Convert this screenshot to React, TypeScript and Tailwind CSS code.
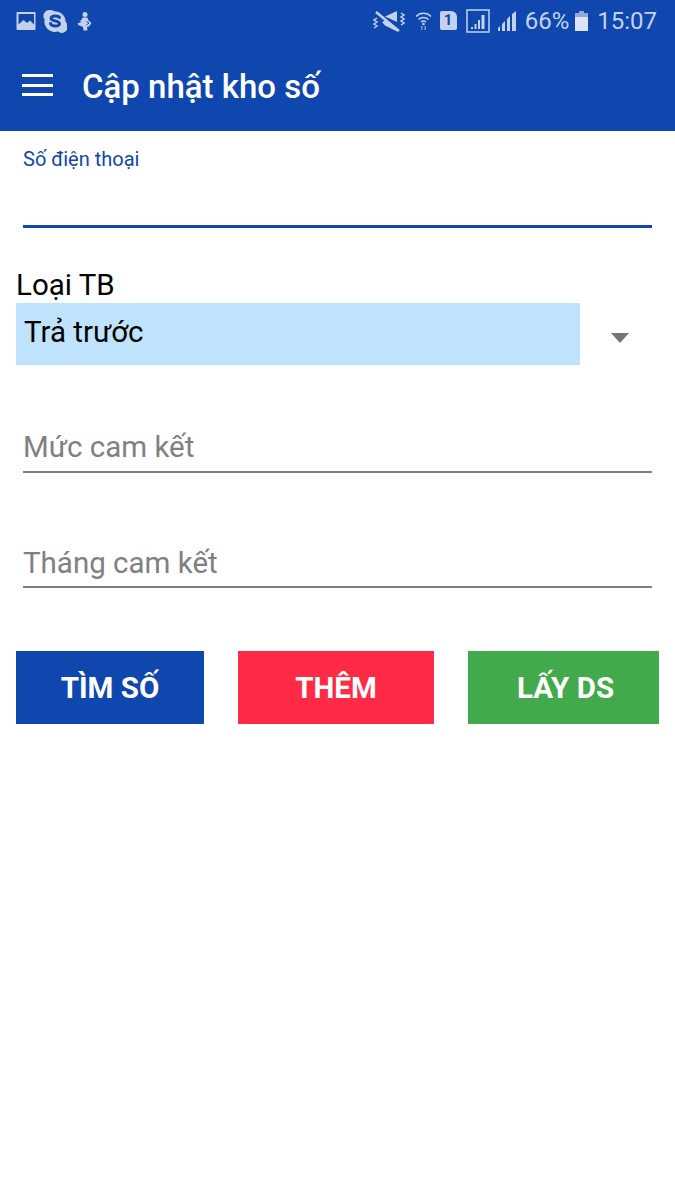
import React from "react";

const ICON = "#c3d2ec";

function StatusLeft() {
  return (
    <div className="flex items-center">
      <svg width="20" height="20" viewBox="0 0 20 20" className="ml-[16px]">
        <path fill={ICON} fillRule="evenodd" d="M1.5 1h17a1 1 0 0 1 1 1v16a1 1 0 0 1-1 1h-17a1 1 0 0 1-1-1V2a1 1 0 0 1 1-1zM2.5 13.500l5-4.500 3.500 3 3-2.500 4 4V3h-15.500z" />
      </svg>
      <svg width="24" height="24" viewBox="0 0 24 24" className="ml-[7px]">
        <path fill={ICON} d="M7 1a6 6 0 0 1 4 1.300A10.500 10.500 0 0 1 22.600 13a6 6 0 0 1-7.600 9.600A10.500 10.500 0 0 1 1.600 10.500 6 6 0 0 1 7 1z" />
        <path fill="none" stroke="#0f47af" strokeWidth="3" strokeLinecap="round" d="M16.500 8.500c-1-1.700-8-2.500-8.500.8-.4 3 8.500 2.200 8.500 5.500 0 3-7.500 3-9-.2" />
      </svg>
      <svg width="16" height="20" viewBox="0 0 16 20" className="ml-[10px]">
        <circle cx="8" cy="3.500" r="2.500" fill={ICON} />
        <path fill={ICON} d="M5.500 6.500h5l1 3 3 2.500-2.500 3.500-2 .5.500 3.500H6.500l-.5-3.500L1.500 14l-1-1.500 4-1.500-2-1 2-1z" />
        <path fill="none" stroke="#0f47af" strokeWidth="1" d="M9.500 10.500l2.500 1.500-2.500 2" />
      </svg>
    </div>
  );
}

function StatusRight() {
  return (
    <div className="flex items-center">
      <svg width="32" height="22" viewBox="0 0 32 22">
        <path fill={ICON} d="M12 6.500L24 1v11zM9 12l4-2 11 9v2.500L12 15.500z" />
        <path stroke={ICON} strokeWidth="2.500" d="M3 2l23 19" />
        <path fill="none" stroke={ICON} strokeWidth="1.500" d="M4 8l-3 2 3 2-3 2 3 2-3 2M28 3l3 2-3 2 3 2-3 2 3 2-3 2" />
      </svg>
      <svg width="17" height="20" viewBox="0 0 17 20" className="ml-[10px]">
        <g fill="none" stroke={ICON} strokeWidth="1.500">
          <path d="M1 5.500a10.500 10.500 0 0 1 15 0" />
          <path d="M3.500 8.500a7 7 0 0 1 10 0" />
          <path d="M6 11a3.500 3.500 0 0 1 5 0" />
        </g>
        <circle cx="8.500" cy="13" r="1.300" fill={ICON} />
        <path fill="#7d9ad0" d="M6 15h1.500v4H6zM9.500 15H11v4H9.500z" />
      </svg>
      <div className="ml-[8px] flex h-[19px] w-[17px] items-center justify-center rounded-[2px] rounded-tr-[6px] bg-[#c3d2ec] font-['Roboto',sans-serif] text-[15px] font-bold leading-none text-[#0f47af]">
        1
      </div>
      <svg width="24" height="24" viewBox="0 0 24 24" className="ml-[9px]">
        <rect x="1" y="1" width="22" height="22" fill="none" stroke={ICON} strokeWidth="1.500" />
        <path fill={ICON} d="M5 18h2v2H5zM8.500 15h2v5h-2zM12 11h2v9h-2zM15.500 6h3v14h-3z" />
      </svg>
      <svg width="20" height="20" viewBox="0 0 20 20" className="ml-[7px]">
        <path fill={ICON} d="M1 17l2-2v5H1zM5 13l3-3v10H5zM10 8l3-3v15h-3zM15 3l4-3v20h-4z" />
      </svg>
      <span className="ml-[8px] font-['Roboto',sans-serif] text-[24px] leading-none text-[#c3d2ec]">66%</span>
      <svg width="13" height="20" viewBox="0 0 13 20" className="ml-[6px]">
        <path fill="#8fa8d8" d="M4 0h5v2h4v4H0V2h4z" />
        <rect y="6" width="13" height="14" fill="#dbe4f4" />
      </svg>
      <span className="ml-[9px] font-['Roboto',sans-serif] text-[24px] leading-none text-[#c3d2ec]">15:07</span>
    </div>
  );
}

function UnderlineField({ label, className, textClass }: { label: string; className: string; textClass: string }) {
  return (
    <div className={className}>
      <div className="ml-[23px] mr-[23px] h-[40px] border-b-[2px] border-[#808080] box-content">
        <span className={textClass}>{label}</span>
      </div>
    </div>
  );
}

export default function App() {
  return (
    <div className="min-h-[1200px] w-[675px] bg-white font-['Roboto',sans-serif]">
      <header className="h-[131px] bg-[#0f47af]">
        <div className="flex h-[41px] items-center justify-between pr-[18px]">
          <StatusLeft />
          <StatusRight />
        </div>
        <div className="flex h-[90px] items-center">
          <div className="ml-[22px] mb-[2px] flex h-[22px] w-[31px] flex-col justify-between">
            <div className="h-[3px] bg-white" />
            <div className="h-[3px] bg-white" />
            <div className="h-[3px] bg-white" />
          </div>
          <h1 className="ml-[29px] text-[33px] font-medium leading-none text-white">Cập nhật kho số</h1>
        </div>
      </header>

      <div className="ml-[23px] mr-[23px] h-[97px] border-b-[3px] border-[#0f47af]">
        <div className="pt-[18px] text-[20px] leading-[21px] text-[#0f47af]">Số điện thoại</div>
      </div>

      <div className="ml-[16px] mt-[41px] h-[34px] text-[29.500px] leading-[33px] text-black">Loại TB</div>

      <div className="flex h-[62px] items-start">
        <div className="ml-[16px] h-[62px] w-[564px] bg-[#bfe3fc] pl-[8px] pt-[13px] text-[29.500px] leading-[33px] text-black">
          Trả trước
        </div>
        <svg width="18" height="10" viewBox="0 0 18 10" className="ml-[31px] mt-[30px]">
          <path fill="#757575" d="M0 0h18l-9 10z" />
        </svg>
      </div>

      <UnderlineField
        label="Mức cam kết"
        className="mt-[66px]"
        textClass="block text-[29.500px] leading-[33px] text-[#808080]"
      />
      <UnderlineField
        label="Tháng cam kết"
        className="mt-[73px]"
        textClass="block pt-[1px] text-[29.500px] leading-[33px] text-[#808080]"
      />

      <div className="mt-[63px] flex items-stretch pl-[16px] pr-[16px] text-[29.500px] font-bold text-white">
        <div className="flex h-[73px] w-[188px] items-center justify-center bg-[#0f47af] pt-[1px]">TÌM SỐ</div>
        <div className="ml-[34px] flex h-[73px] w-[196px] items-center justify-center bg-[#ff2a45] pt-[1px]">THÊM</div>
        <div className="ml-[34px] flex h-[73px] w-[191px] items-center justify-center bg-[#43a94d] pl-[4px] pt-[1px]">LẤY DS</div>
      </div>
    </div>
  );
}
